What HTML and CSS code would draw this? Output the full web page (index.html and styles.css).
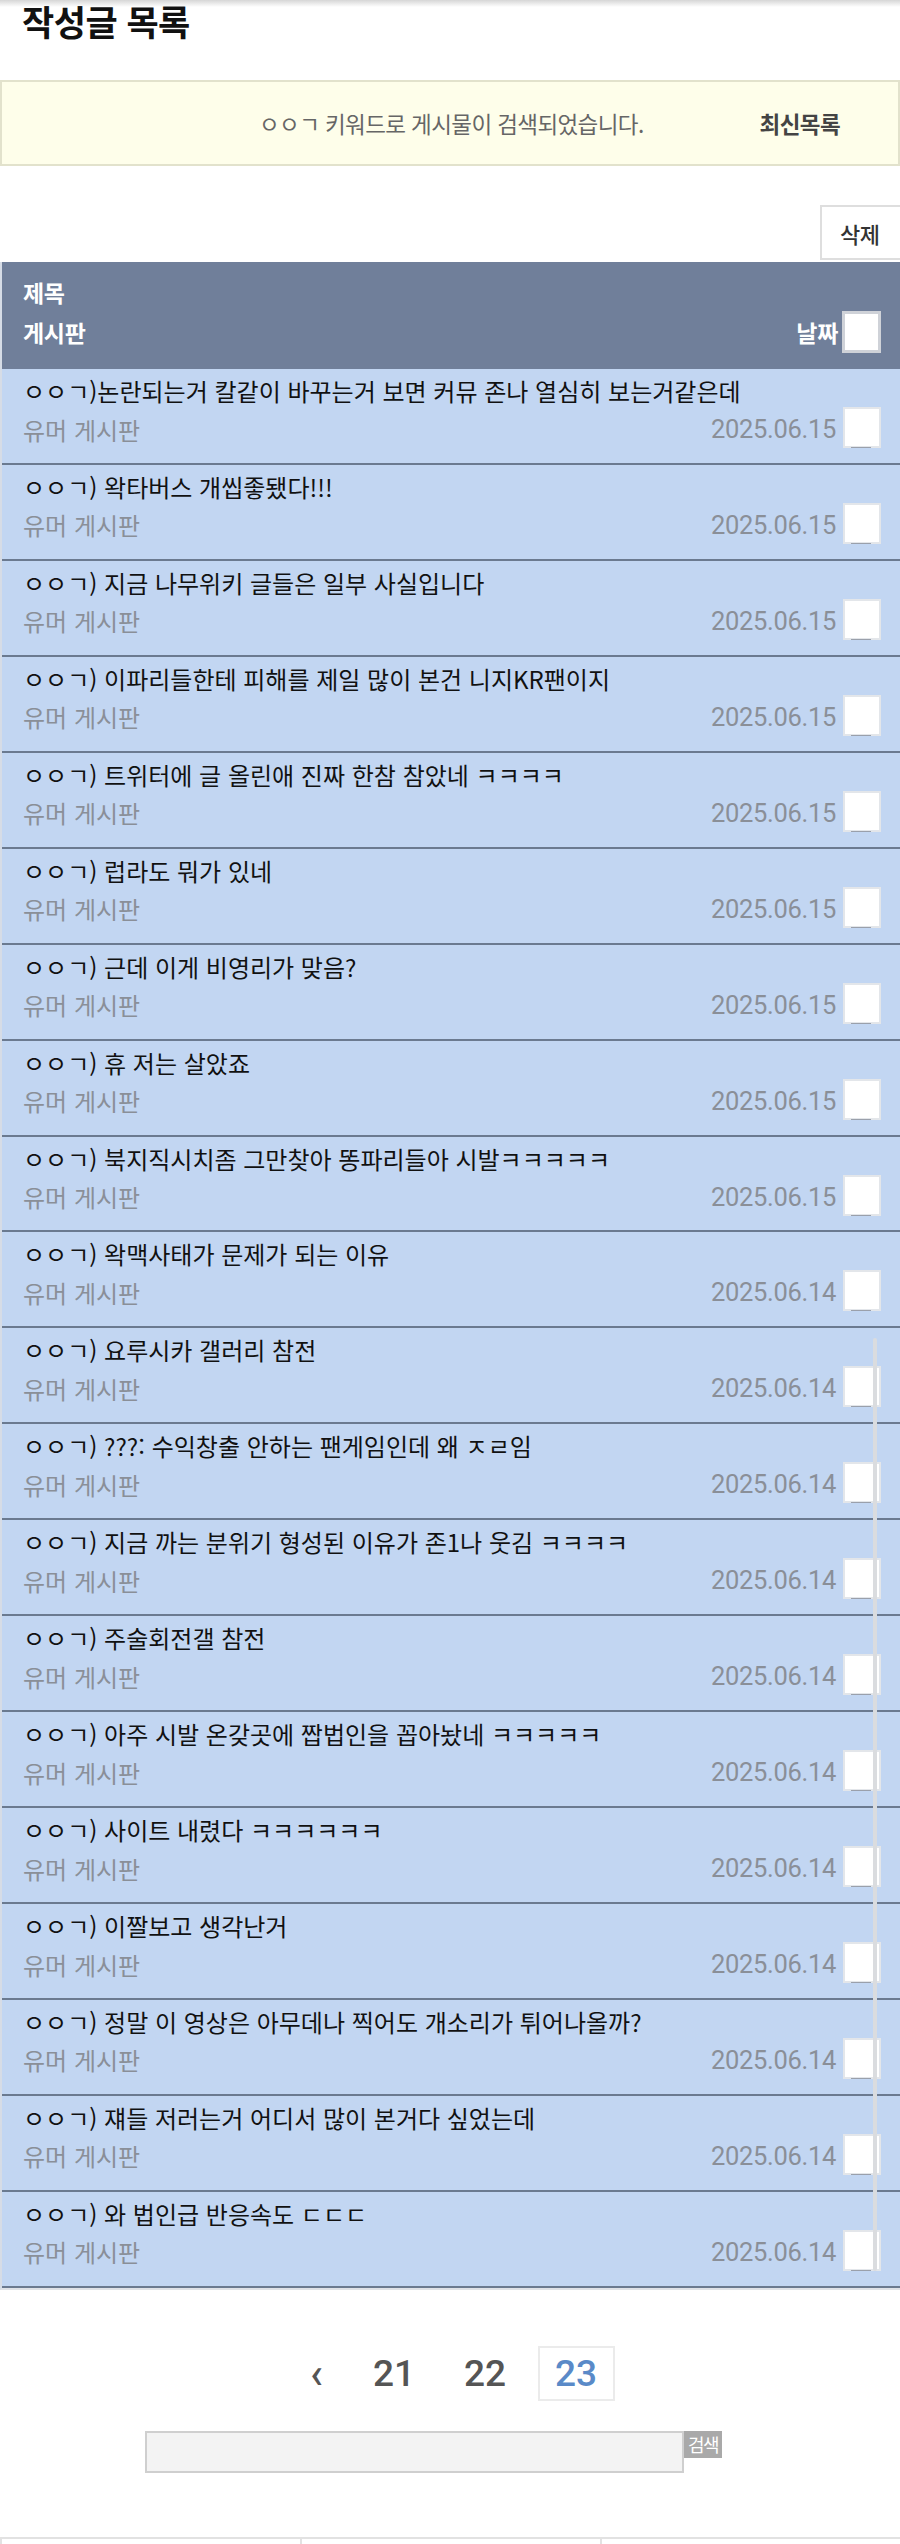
FILE: index.html
```html
<!DOCTYPE html>
<html lang="ko">
<head>
<meta charset="utf-8">
<title>작성글 목록</title>
<link rel="stylesheet" href="styles.css">
</head>
<body>
<div class="topshade"></div>
<h1 class="page-title">작성글 목록</h1>

<div class="notice">
  <span class="notice-msg">ㅇㅇㄱ 키워드로 게시물이 검색되었습니다.</span>
  <a class="notice-link">최신목록</a>
</div>

<div class="actions">
  <button class="del-btn">삭제</button>
</div>

<div class="list">
  <div class="list-head">
    <div class="head-title">제목</div>
    <div class="head-sub">
      <span class="head-board">게시판</span>
      <span class="head-date">날짜</span>
      <span class="cb cb-head"></span>
    </div>
  </div>

  <div class="row"><div class="row-title">ㅇㅇㄱ)논란되는거 칼같이 바꾸는거 보면 커뮤 존나 열심히 보는거같은데</div><div class="row-sub"><span class="board">유머 게시판</span><span class="date">2025.06.15</span><span class="cb"></span></div></div>
  <div class="row"><div class="row-title">ㅇㅇㄱ) 왁타버스 개씹좋됐다!!!</div><div class="row-sub"><span class="board">유머 게시판</span><span class="date">2025.06.15</span><span class="cb"></span></div></div>
  <div class="row"><div class="row-title">ㅇㅇㄱ) 지금 나무위키 글들은 일부 사실입니다</div><div class="row-sub"><span class="board">유머 게시판</span><span class="date">2025.06.15</span><span class="cb"></span></div></div>
  <div class="row"><div class="row-title">ㅇㅇㄱ) 이파리들한테 피해를 제일 많이 본건 니지KR팬이지</div><div class="row-sub"><span class="board">유머 게시판</span><span class="date">2025.06.15</span><span class="cb"></span></div></div>
  <div class="row"><div class="row-title">ㅇㅇㄱ) 트위터에 글 올린애 진짜 한참 참았네 ㅋㅋㅋㅋ</div><div class="row-sub"><span class="board">유머 게시판</span><span class="date">2025.06.15</span><span class="cb"></span></div></div>
  <div class="row"><div class="row-title">ㅇㅇㄱ) 럽라도 뭐가 있네</div><div class="row-sub"><span class="board">유머 게시판</span><span class="date">2025.06.15</span><span class="cb"></span></div></div>
  <div class="row"><div class="row-title">ㅇㅇㄱ) 근데 이게 비영리가 맞음?</div><div class="row-sub"><span class="board">유머 게시판</span><span class="date">2025.06.15</span><span class="cb"></span></div></div>
  <div class="row"><div class="row-title">ㅇㅇㄱ) 휴 저는 살았죠</div><div class="row-sub"><span class="board">유머 게시판</span><span class="date">2025.06.15</span><span class="cb"></span></div></div>
  <div class="row"><div class="row-title">ㅇㅇㄱ) 북지직시치좀 그만찾아 똥파리들아 시발ㅋㅋㅋㅋㅋ</div><div class="row-sub"><span class="board">유머 게시판</span><span class="date">2025.06.15</span><span class="cb"></span></div></div>
  <div class="row"><div class="row-title">ㅇㅇㄱ) 왁맥사태가 문제가 되는 이유</div><div class="row-sub"><span class="board">유머 게시판</span><span class="date">2025.06.14</span><span class="cb"></span></div></div>
  <div class="row"><div class="row-title">ㅇㅇㄱ) 요루시카 갤러리 참전</div><div class="row-sub"><span class="board">유머 게시판</span><span class="date">2025.06.14</span><span class="cb"></span></div></div>
  <div class="row"><div class="row-title">ㅇㅇㄱ) ???: 수익창출 안하는 팬게임인데 왜 ㅈㄹ임</div><div class="row-sub"><span class="board">유머 게시판</span><span class="date">2025.06.14</span><span class="cb"></span></div></div>
  <div class="row"><div class="row-title">ㅇㅇㄱ) 지금 까는 분위기 형성된 이유가 존1나 웃김 ㅋㅋㅋㅋ</div><div class="row-sub"><span class="board">유머 게시판</span><span class="date">2025.06.14</span><span class="cb"></span></div></div>
  <div class="row"><div class="row-title">ㅇㅇㄱ) 주술회전갤 참전</div><div class="row-sub"><span class="board">유머 게시판</span><span class="date">2025.06.14</span><span class="cb"></span></div></div>
  <div class="row"><div class="row-title">ㅇㅇㄱ) 아주 시발 온갖곳에 짭법인을 꼽아놨네 ㅋㅋㅋㅋㅋ</div><div class="row-sub"><span class="board">유머 게시판</span><span class="date">2025.06.14</span><span class="cb"></span></div></div>
  <div class="row"><div class="row-title">ㅇㅇㄱ) 사이트 내렸다 ㅋㅋㅋㅋㅋㅋ</div><div class="row-sub"><span class="board">유머 게시판</span><span class="date">2025.06.14</span><span class="cb"></span></div></div>
  <div class="row"><div class="row-title">ㅇㅇㄱ) 이짤보고 생각난거</div><div class="row-sub"><span class="board">유머 게시판</span><span class="date">2025.06.14</span><span class="cb"></span></div></div>
  <div class="row"><div class="row-title">ㅇㅇㄱ) 정말 이 영상은 아무데나 찍어도 개소리가 튀어나올까?</div><div class="row-sub"><span class="board">유머 게시판</span><span class="date">2025.06.14</span><span class="cb"></span></div></div>
  <div class="row"><div class="row-title">ㅇㅇㄱ) 쟤들 저러는거 어디서 많이 본거다 싶었는데</div><div class="row-sub"><span class="board">유머 게시판</span><span class="date">2025.06.14</span><span class="cb"></span></div></div>
  <div class="row"><div class="row-title">ㅇㅇㄱ) 와 법인급 반응속도 ㄷㄷㄷ</div><div class="row-sub"><span class="board">유머 게시판</span><span class="date">2025.06.14</span><span class="cb"></span></div></div>

  <div class="scrollbar"></div>
</div>

<div class="pager">
  <a class="page page-prev">‹</a>
  <a class="page">21</a>
  <a class="page">22</a>
  <a class="page page-current">23</a>
</div>

<div class="search">
  <div class="search-input"></div>
  <button class="search-btn">검색</button>
</div>

<div class="tabs">
  <div class="tab"></div>
  <div class="tab"></div>
  <div class="tab"></div>
</div>
</body>
</html>
```

FILE: styles.css
```css
* { box-sizing: border-box; }

html, body {
  margin: 0;
  padding: 0;
  background: #fff;
}

body {
  font-family: "Noto Sans CJK KR", "Noto Sans", sans-serif;
  color: #111;
  position: relative;
  width: 900px;
  overflow: hidden;
}

.topshade {
  position: absolute;
  left: 0;
  top: 0;
  width: 900px;
  height: 7px;
  background: linear-gradient(#d6d6d6, rgba(255,255,255,0));
}

.page-title {
  margin: 0;
  padding-left: 22px;
  font-size: 35px;
  line-height: 42px;
  font-weight: 700;
  color: #111;
  height: 80px;
  letter-spacing: -0.5px;
}

.notice {
  height: 86px;
  background: #fefeea;
  border: 2px solid #e2e2cc;
  display: flex;
  align-items: center;
  padding-left: 257px;
  padding-right: 58px;
}

.notice-msg {
  font-size: 22.5px;
  color: #666;
  letter-spacing: -0.6px;
}

.notice-link {
  margin-left: auto;
  font-size: 22.5px;
  font-weight: 700;
  color: #444;
  letter-spacing: -0.6px;
}

.actions {
  display: flex;
  justify-content: flex-end;
  padding-top: 39px;
  height: 96px;
}

.del-btn {
  width: 80px;
  height: 55px;
  background: #fff;
  border: 2px solid #dedede;
  border-right: none;
  padding: 0 0 0 18px;
  text-align: left;
  font-family: inherit;
  font-size: 22px;
  font-weight: 500;
  color: #333;
  letter-spacing: -0.6px;
}

.list {
  position: relative;
  border-left: 2px solid #d6dce6;
  border-bottom: 2px solid #dfe2e7;
}

.list-head {
  background: #707f9a;
  height: 107px;
  padding: 10px 0 0 21px;
  color: #fff;
  font-weight: 700;
  font-size: 23px;
  letter-spacing: -0.3px;
}

.head-title {
  line-height: 40px;
}

.head-sub {
  display: flex;
  align-items: center;
  height: 40px;
}

.head-board { flex: 1; }

.head-date {
  margin-right: 4px;
}

.cb {
  position: relative;
  display: block;
  width: 34px;
  height: 37px;
  background: #fff;
  box-shadow: 0 0 0 2px #e3e6ea;
}

.cb::after {
  content: "";
  position: absolute;
  left: 6px;
  right: 8px;
  bottom: -2px;
  height: 1px;
  background: #9aa0ab;
}

.cb-head {
  width: 39px;
  height: 42px;
  margin-right: 19px;
  border: 3px solid #cfd2d8;
  box-shadow: none;
}

.cb-head::after { display: none; }

.row {
  background: #c2d6f2;
  border-bottom: 2px solid #6b7a90;
  padding: 4px 0 0 21px;
  height: 95.95px;
}

.row-title {
  font-size: 24px;
  line-height: 36px;
  color: #111;
  white-space: nowrap;
  overflow: hidden;
}

.row-sub {
  display: flex;
  align-items: center;
  height: 40px;
}

.board {
  flex: 1;
  font-size: 24px;
  color: #8a8f98;
}

.date {
  font-family: Roboto, "Noto Sans", sans-serif;
  font-size: 25.5px;
  color: #8a8f98;
  margin-right: 9px;
  letter-spacing: -0.3px;
}

.row .cb {
  margin-right: 21px;
  margin-top: -3px;
}

.scrollbar {
  position: absolute;
  left: 871px;
  top: 1076px;
  width: 4px;
  height: 933px;
  border-radius: 2px;
  background: #dadcdf;
}

.pager {
  display: flex;
  justify-content: center;
  align-items: center;
  gap: 14px;
  margin-top: 56px;
  padding-left: 6px;
}

.page {
  display: flex;
  align-items: center;
  justify-content: center;
  width: 77px;
  height: 55px;
  font-family: Roboto, "Noto Sans", sans-serif;
  font-size: 37px;
  font-weight: 500;
  color: #555;
  border: 2px solid transparent;
}

.page-prev {
  width: 50px;
  font-size: 42px;
  font-weight: 500;
  color: #555;
}

.page-current {
  color: #5a8ac8;
  border-color: #ebebeb;
}

.search {
  display: flex;
  align-items: flex-start;
  margin-top: 30px;
  padding-left: 145px;
}

.search-input {
  width: 539px;
  height: 42px;
  background: #f3f3f3;
  border: 2px solid #cfcfcf;
}

.search-btn {
  height: 27px;
  width: 38px;
  padding: 0;
  border: none;
  background: #a9a9a9;
  color: #fff;
  font-family: inherit;
  font-size: 18px;
  line-height: 27px;
  letter-spacing: -1.5px;
  white-space: nowrap;
  overflow: hidden;
}

.tabs {
  display: flex;
  margin-top: 64px;
  height: 11px;
}

.tab {
  flex: 1;
  border: 2px solid #e2e2e2;
  border-bottom: none;
  border-right: none;
}
```
